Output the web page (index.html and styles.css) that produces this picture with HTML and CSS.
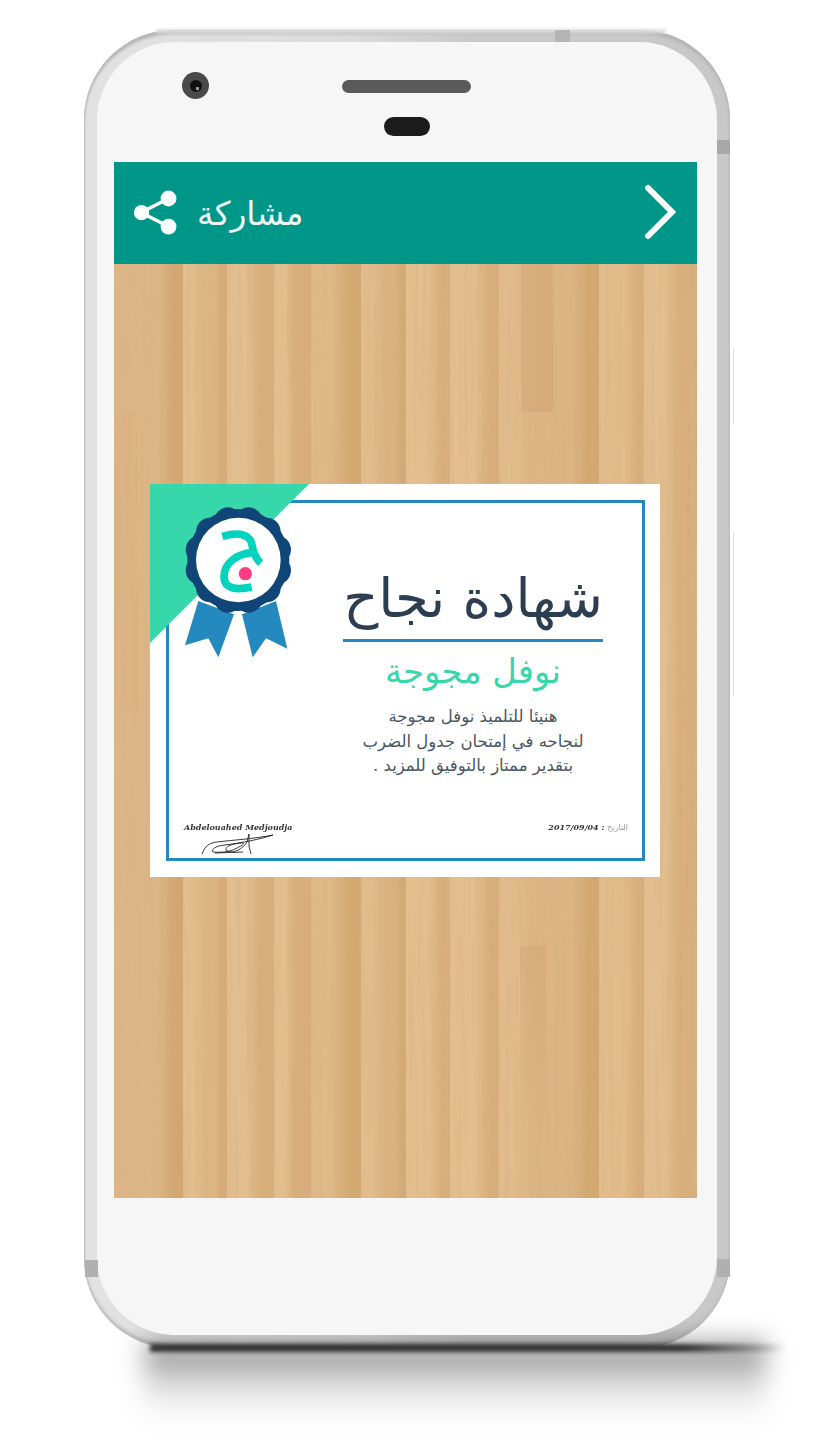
FILE: index.html
```html
<!DOCTYPE html>
<html lang="ar">
    <head>
        <meta charset="UTF-8" />
        <title>مشاركة</title>
        <link rel="stylesheet" href="styles.css">
    </head>
    <body>
        <div class="phone">
            <span class="top-glow"></span>
            <span class="band band-left"></span>
            <span class="band band-right"></span>
            <span class="band band-top-right"></span>
            <span class="band band-top"></span>
            <span class="side-key key-one"></span>
            <span class="side-key key-two"></span>
            <div class="screen">
                <div class="earpiece">
                    <div class="camera"><i></i></div>
                    <div class="speaker"></div>
                    <div class="sensor"></div>
                </div>
                <div class="app">
                    <header class="toolbar">
                        <div class="share">
                            <svg class="share-icon" viewBox="0 0 44 46" width="44" height="46">
                                <path d="M34.5 8.5 7 22.5 34.500 36.500" fill="none" stroke="#fff" stroke-width="3.500"/>
                                <circle cx="34.500" cy="8.500" r="7.900" fill="#fff"/>
                                <circle cx="7.500" cy="22.700" r="7.600" fill="#fff"/>
                                <circle cx="34.500" cy="36.700" r="7.900" fill="#fff"/>
                            </svg>
                            <span class="share-label" dir="rtl">مشاركة</span>
                        </div>
                        <svg class="back-icon" viewBox="0 0 36 58" width="36" height="58">
                            <path d="M4 4 28 28 4 52" fill="none" stroke="#fff" stroke-width="6" stroke-linecap="round" stroke-linejoin="miter"/>
                        </svg>
                    </header>
                    <main class="wood">
                        <svg class="grain" width="583" height="934">
                            <filter id="woodGrain" x="0" y="0" width="100%" height="100%">
                                <feTurbulence type="fractalNoise" baseFrequency="0.22 0.006" numOctaves="3" seed="7"/>
                                <feColorMatrix values="0 0 0 0 .62  0 0 0 0 .42  0 0 0 0 .2  1.6 0 0 0 -.62"/>
                            </filter>
                            <rect width="583" height="934" filter="url(#woodGrain)"/>
                        </svg>
                        <div class="certificate">
                            <svg class="seal" viewBox="0 0 510 540" width="170" height="180">
                                <polygon points="0,0 477,0 0,477" fill="#35d7ab"/>
                                <g transform="translate(-30 -27)">
                                    <polygon points="175,378 282,418 235,547 205,490 135,511" fill="#2389bf"/>
                                    <polygon points="408,378 306,418 338,547 378,490 442,521" fill="#2389bf"/>
                                    <g fill="#0f4577">
                                        <circle cx="295" cy="255" r="153"/>
                                        <circle cx="295" cy="135" r="42" transform="rotate(15 295 255)"/>
                                        <circle cx="295" cy="135" r="42" transform="rotate(45 295 255)"/>
                                        <circle cx="295" cy="135" r="42" transform="rotate(75 295 255)"/>
                                        <circle cx="295" cy="135" r="42" transform="rotate(105 295 255)"/>
                                        <circle cx="295" cy="135" r="42" transform="rotate(135 295 255)"/>
                                        <circle cx="295" cy="135" r="42" transform="rotate(165 295 255)"/>
                                        <circle cx="295" cy="135" r="42" transform="rotate(195 295 255)"/>
                                        <circle cx="295" cy="135" r="42" transform="rotate(225 295 255)"/>
                                        <circle cx="295" cy="135" r="42" transform="rotate(255 295 255)"/>
                                        <circle cx="295" cy="135" r="42" transform="rotate(285 295 255)"/>
                                        <circle cx="295" cy="135" r="42" transform="rotate(315 295 255)"/>
                                        <circle cx="295" cy="135" r="42" transform="rotate(345 295 255)"/>
                                    </g>
                                    <circle cx="295" cy="255" r="127" fill="#fff"/>
                                    <path d="M247 184C285 173 325 172 335 205 340 235 348 252 362 264M342 232C290 235 252 265 252 305 252 342 290 346 335 336" fill="none" stroke="#00d4bc" stroke-width="23"/>
                                    <circle cx="316" cy="296" r="20" fill="#fb3e83"/>
                                </g>
                            </svg>
                            <div class="frame">
                                <div class="message" dir="rtl">
                                    <h1 class="cert-title">شهادة نجاح</h1>
                                    <h2 class="cert-name">نوفل مجوجة</h2>
                                    <p class="cert-text">هنيئا للتلميذ نوفل مجوجة<br>لنجاحه في إمتحان جدول الضرب<br>بتقدير ممتاز بالتوفيق للمزيد .</p>
                                </div>
                                <div class="cert-footer">
                                    <div class="signer">
                                        <span class="signer-name">Abdelouahed Medjoudja</span>
                                        <svg class="signature" viewBox="0 0 76 24" width="76" height="24">
                                            <path d="M1 21C4 13 8 10 16 9 32 7 52 6 72 2 60 6 40 10 24 12 12 13 10 18 12 19 24 20 30 18 36 15 44 11 44 10 40 10 30 11 22 14 26 18 32 21 42 16 46 9L48 1 48 13 50 21M14 20 42 19" fill="none" stroke="#222" stroke-width=".9"/>
                                        </svg>
                                    </div>
                                    <div class="cert-date"><b>2017/09/04 :</b> <span dir="rtl">التاريخ</span></div>
                                </div>
                            </div>
                        </div>
                    </main>
                </div>
            </div>
        </div>
    </body>
</html>
```

FILE: styles.css
```css
html, body {
    margin: 0;
    height: 1437px;
    overflow: hidden;
    background: #fff;
}
.phone {
    position: relative;
    z-index: 0;
    box-sizing: border-box;
    width: 646px;
    height: 1318px;
    margin: 30px 0 0 84px;
    padding: 12px 13px 13px 13px;
    border-radius: 90px;
    background: linear-gradient(90deg, #e2e2e2 0, #dcdcdc 40%, #cacaca 60%, #c8c8c8 100%);
    box-shadow: inset 0 4px 3px #b6b6b6, inset 0 -4px 3px #c0c0c0, inset 1px 0 1px #cfcfcf, inset -1px 0 1px #bcbcbc;
}
/* shadow under the handset */
.phone::before {
    content: "";
    position: absolute;
    z-index: -1;
    left: 66px;
    right: -56px;
    bottom: -4px;
    height: 8px;
    background: linear-gradient(90deg, #333 0, #333 84%, rgba(80, 80, 80, 0.4) 95%, rgba(80, 80, 80, 0) 100%);
    filter: blur(2px);
}
.phone::after {
    content: "";
    position: absolute;
    z-index: -2;
    left: 60px;
    right: -36px;
    bottom: -72px;
    height: 78px;
    background: linear-gradient(rgba(0, 0, 0, 0.48), rgba(0, 0, 0, 0.12) 55%, rgba(0, 0, 0, 0));
    filter: blur(13px);
}
.top-glow {
    position: absolute;
    z-index: -1;
    left: 72px;
    right: 64px;
    top: -1px;
    height: 4px;
    background: #dedede;
    filter: blur(1.500px);
}
.band {
    position: absolute;
    background: #b0b0b0;
}
.band-left {
    left: 1px;
    top: 1230px;
    width: 13px;
    height: 17px;
}
.band-right {
    right: 0;
    top: 1229px;
    width: 13px;
    height: 18px;
}
.band-top-right {
    right: 0;
    top: 110px;
    width: 13px;
    height: 14px;
    background: #a8a8a8;
}
.band-top {
    left: 471px;
    top: 0;
    width: 15px;
    height: 12px;
    background: #b4b4b4;
}
.side-key {
    position: absolute;
    right: -4px;
    width: 3px;
    border-right: 1px solid #dcdcdc;
}
.key-one {
    top: 318px;
    height: 76px;
}
.key-two {
    top: 502px;
    height: 164px;
}
.screen {
    height: 100%;
    border-radius: 78px;
    background: #f6f6f6;
    overflow: hidden;
}
.earpiece {
    display: grid;
    grid-template-columns: 1fr 129px 1fr;
    height: 120px;
    box-sizing: border-box;
    padding: 30px 1px 0 0;
}
.camera {
    display: flex;
    align-items: center;
    justify-content: center;
    width: 27px;
    height: 27px;
    margin-left: 85px;
    border-radius: 50%;
    background: #4a4a4a;
}
.camera i {
    width: 12px;
    height: 12px;
    border-radius: 50%;
    background: radial-gradient(circle at 62% 72%, #999 0 1.500px, #111 2px);
}
.speaker {
    width: 129px;
    height: 13px;
    margin-top: 8px;
    border-radius: 7px;
    background: #5a5a5a;
}
.sensor {
    grid-column: 2;
    justify-self: center;
    width: 46px;
    height: 19px;
    margin-top: -8px;
    border-radius: 10px;
    background: #1c1c1c;
}
.app {
    margin: 0 20px 0 17px;
}
.toolbar {
    display: flex;
    align-items: center;
    justify-content: space-between;
    height: 102px;
    padding: 0 17px 0 20px;
    background: #009688;
}
.share {
    display: flex;
    align-items: center;
    gap: 19px;
}
.share-label {
    color: #eef6f5;
    font: 33px "DejaVu Sans", sans-serif;
}
/* planks darken towards their right edge, then jump back to the next light one */
.wood {
    position: relative;
    height: 934px;
    padding-top: 220px;
    box-sizing: border-box;
    background-color: #dfb888;
    background-image:
        linear-gradient(rgba(190, 135, 75, 0.2), rgba(190, 135, 75, 0.2)),
        linear-gradient(rgba(190, 135, 75, 0.18), rgba(190, 135, 75, 0)),
        linear-gradient(rgba(190, 135, 75, 0.05), rgba(190, 135, 75, 0.05)),
        linear-gradient(90deg,
            #ddb687 0 44px, #d2a771 60px 69px, #e3be8f 69px 78px, #dcb584 92px 102px,
            #d6ab77 106px 113px, #e3be8f 113px 132px, #d8af7b 146px 160px, #e3be8f 160px 172px,
            #d8af7c 180px 197px, #e0b989 197px 216px, #d3a972 236px 247px, #e2bc8c 247px 258px,
            #dab280 272px 281px, #d4aa75 288px 292px, #e3be8f 292px 314px, #d8af7b 328px 336px,
            #e3be8f 336px 360px, #d7ae7a 376px 385px, #e2bc8c 385px 400px, #dcb485 420px 458px,
            #d3a870 474px 485px, #e2bc8c 485px 510px, #d8af7b 524px 530px, #e3be8f 530px 550px,
            #d8af7d 566px 583px);
    background-size: 32px 148px, 26px 200px, 24px 300px, 100% 100%;
    background-position: 407px 0, 406px 682px, 0 148px, 0 0;
    background-repeat: no-repeat;
}
.grain {
    position: absolute;
    left: 0;
    top: 0;
    opacity: 0.4;
}
.certificate {
    position: relative;
    box-sizing: border-box;
    width: 510px;
    height: 393px;
    margin: 0 0 0 36px;
    padding: 16px 15px 16px 16px;
    background: #fff;
}
.seal {
    position: absolute;
    left: 0;
    top: 0;
}
.frame {
    display: flex;
    flex-direction: column;
    height: 100%;
    box-sizing: border-box;
    border: 3px solid #2389bf;
    font-family: "DejaVu Sans", sans-serif;
}
.message {
    width: 260px;
    margin: 0 0 0 174px;
    text-align: center;
}
.cert-title {
    margin: 62px 0 0;
    padding-bottom: 8px;
    border-bottom: 3px solid #2389bf;
    color: #2c3e50;
    font-size: 54.500px;
    line-height: 66px;
    font-weight: normal;
    white-space: nowrap;
}
.cert-name {
    margin: 8px 0 0;
    color: #35d7ab;
    font-size: 33.800px;
    line-height: 44px;
    font-weight: normal;
    white-space: nowrap;
}
.cert-text {
    margin: 11px 0 0;
    color: #4a5560;
    font-size: 16.500px;
    line-height: 24.500px;
    white-space: nowrap;
}
.cert-footer {
    display: flex;
    justify-content: space-between;
    align-items: flex-start;
    margin-top: auto;
    padding: 0 14px 1px 15px;
    filter: blur(.4px);
}
.signer {
    display: flex;
    flex-direction: column;
}
.signer-name, .cert-date {
    color: #333;
    font: italic bold 8px "DejaVu Serif", serif;
}
.signer-name {
    white-space: nowrap;
}
.signature {
    margin: 1px 0 0 17px;
}
.cert-date span {
    color: #999;
    font: 8px "DejaVu Sans", sans-serif;
}
```
